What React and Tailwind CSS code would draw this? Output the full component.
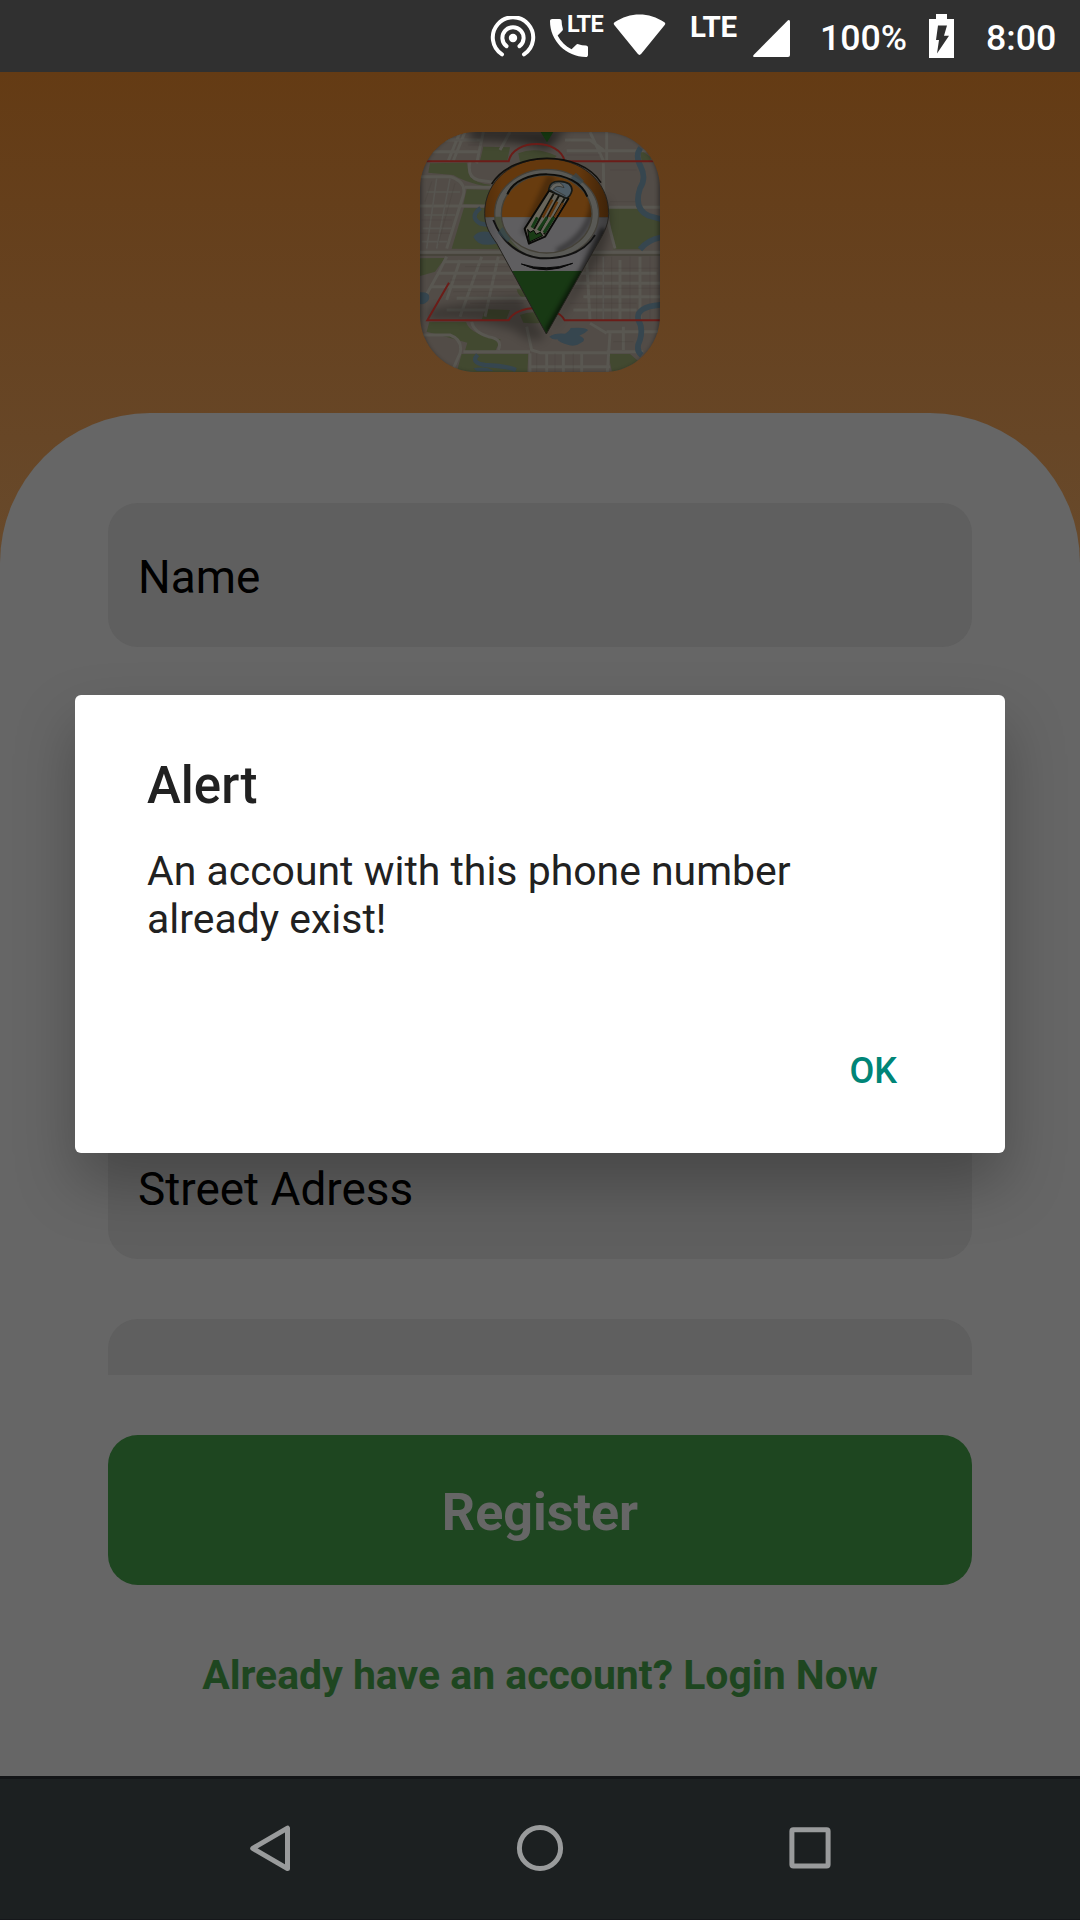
import React from 'react';

function HotspotIcon() {
  return (
    <svg className="h-[42px] w-[46px]" viewBox="0 0 46 42" fill="none" stroke="#fff" strokeWidth="4" strokeLinecap="round">
      <path d="M12 38.4A20.2 20.2 0 1 1 34 38.4" />
      <path d="M16.5 30.2A10.6 10.6 0 1 1 29.5 30.2" />
      <circle cx="23" cy="22" r="4.2" fill="#fff" stroke="none" />
    </svg>
  );
}

function PhoneIcon() {
  return (
    <svg className="mt-[19px] h-[38px] w-[38px]" viewBox="3 3 18 18" fill="#fff">
      <path d="M6.62 10.79c1.44 2.83 3.76 5.14 6.59 6.59l2.2-2.2c.27-.27.67-.36 1.02-.24 1.12.37 2.33.57 3.57.57.55 0 1 .45 1 1V20c0 .55-.45 1-1 1-9.39 0-17-7.61-17-17 0-.55.45-1 1-1h3.5c.55 0 1 .45 1 1 0 1.25.2 2.45.57 3.57.11.35.03.74-.25 1.02l-2.2 2.2z" />
    </svg>
  );
}

function StatusBar() {
  return (
    <div className="flex h-[72px] shrink-0 items-start bg-[#303030] pl-[490px] text-white">
      <div className="mt-4 flex h-[42px] w-[46px]"><HotspotIcon /></div>
      <div className="relative ml-[14px] w-[55px]">
        <PhoneIcon />
        <span className="absolute left-[17px] top-[16px] text-[23.5px] font-bold leading-[16px] tracking-[-0.6px]">LTE</span>
      </div>
      <svg className="ml-[8px] mt-[14px] h-[42px] w-[53px]" viewBox="0 0 53 42" fill="#fff">
        <path d="M1.3 10.9Q0 9.4 1.6 8.3C17-2.2 36-2.2 51.4 8.3Q53 9.4 51.7 10.9L28.3 39.8Q26.5 42 24.7 39.8Z" />
      </svg>
      <span className="ml-[24px] mt-[17px] w-[50px] text-[29.5px] font-bold leading-[21px] tracking-[-0.2px]">LTE</span>
      <svg className="ml-[13px] mt-[20px] h-[37px] w-[37px]" viewBox="0 0 37 37" fill="#fff">
        <path d="M35 .3Q37-.5 37 1.6V35Q37 37 35 37H1.3Q-.8 37 .6 35Z" />
      </svg>
      <span className="ml-[30px] w-[90px] text-[35.7px] font-medium leading-[76px]">100%</span>
      <svg className="ml-[19px] mt-[14px] h-[44px] w-[25px]" viewBox="0 0 25 44">
        <path fill="#fff" d="M7 0h11v5h7v39H0V5h7z" />
        <path fill="#303030" d="M9 11.5h9l-3 10.3h5L8 39.5l2-13.5H7z" />
      </svg>
      <span className="ml-[32px] text-[35.7px] font-medium leading-[76px]">8:00</span>
    </div>
  );
}

function MapTile() {
  return (
    <g>
      <path fill="#424930" d="M220 80L300 82L292 122H210ZM325 100Q378 78 440 108Q430 128 330 125ZM60 130L170 128L180 170Q200 190 245 195L230 200Q160 185 130 165L55 158ZM170 208L245 210L235 255L160 253ZM162 263L240 264Q225 330 275 388L125 386ZM595 262H690Q710 285 750 300V345Q715 350 690 388H610ZM30 415L105 414L75 455L30 468ZM690 88L722 112V124H695Z" />
      <path fill="#424930" d="M225 568L300 570L288 600H215ZM330 585Q380 565 430 595Q420 615 340 608ZM58 606H168Q180 645 272 658L255 695L165 692L172 668Q110 650 50 635ZM155 702L355 702L352 756H140ZM595 702L660 702Q680 720 700 735L690 756H606ZM320 508Q345 505 352 535Q325 535 320 508Z" />
      <g fill="none" stroke="#595751" strokeWidth="9">
        <path d="M30 60H215M30 95H210M150 36L115 122M165 36L130 122M300 36L270 90M220 36L200 130M465 60L540 60L580 90M540 36L580 122M590 36V122M470 92H720M30 170H120Q170 185 160 225L110 386M180 125Q170 170 205 180L270 190M165 202H250M30 258H235" />
        <path d="M580 130L582 255L592 300L615 386M590 262H750M30 397H300M520 397H750M110 410L85 460L35 550M150 420L110 540M215 410L150 590M265 410L225 590M105 425H300M80 460H320M60 500H330M140 535H360M110 570H230M470 490H750M500 460H740M530 420L540 600M630 420V600M690 410V600M520 530H750M490 570H680M590 635H750M600 640L592 756M640 620V690M540 610L590 640" />
        <path d="M40 645H120Q160 660 150 700L125 756M185 605Q190 635 235 650Q280 656 265 690M160 695H360M360 700V756M410 700V756M460 700V756M515 700V756M360 740H600M590 695H700M350 620L365 690L390 698H600" />
      </g>
      <g fill="none" stroke="#575550" strokeWidth="5">
        <path d="M50 216H150M42 285H135M38 325H125M35 365H112M80 175L50 386M120 175L80 386M580 410V600" />
      </g>
      <g fill="none" stroke="#3b362f" strokeWidth="2" opacity=".25">
        <path d="M90 60H200M175 75H215M470 105H570M600 150H680M600 245H685M65 185L45 245M35 300H125M30 340H120M135 190L85 370M165 440H295M120 480H310M130 515H325M180 550H340M510 445H745M480 505H750M480 550H680M560 410V600M605 410V600M660 410V600M720 410V600M610 665H670M380 700V756M435 700V756M490 700V756" />
      </g>
      <g fill="none" stroke="#36464f" strokeWidth="17">
        <path d="M692 84Q674 105 692 140T690 205Q670 265 715 287L755 298M755 352Q715 358 690 388M755 554Q675 560 685 600Q700 625 690 660Q675 690 695 706" />
        <path strokeWidth="13" d="M212 264Q177 290 210 310L270 322M203 704Q180 728 225 735Q290 738 318 750" />
      </g>
      <path fill="#36464f" d="M190 350Q205 328 245 337Q290 336 303 352Q280 362 265 370Q205 385 190 350ZM30 517Q65 515 56 540Q45 555 30 552ZM418 650Q435 638 465 641Q480 632 482 624Q530 620 534 631Q525 641 508 647Q534 658 512 669Q498 680 478 676Q445 667 442 658Q427 660 418 650ZM190 745Q230 738 250 753H200Z" />
    </g>
  );
}

function AppLogo() {
  return (
    <svg className="h-60 w-60" viewBox="30 36 720 720">
      <defs>
        <clipPath id="tile"><rect x="30" y="36" width="720" height="720" rx="170" /></clipPath>
        <clipPath id="pin"><path d="M410 116C510 116 596 180 596 280C596 320 575 350 553 388L409 642L260 370C239 340 224 318 224 280C224 180 310 116 410 116Z" /></clipPath>
        <clipPath id="disc"><ellipse cx="410" cy="282" rx="136" ry="117" /></clipPath>
        <filter id="soft" x="-50%" y="-50%" width="200%" height="200%"><feGaussianBlur stdDeviation="15" /></filter>
        <filter id="soft2" x="-50%" y="-50%" width="200%" height="200%"><feGaussianBlur stdDeviation="7" /></filter>
        <linearGradient id="pinShade" x1="0" x2="1"><stop offset="0" stopColor="#000" stopOpacity=".18" /><stop offset=".15" stopColor="#000" stopOpacity="0" /><stop offset=".75" stopColor="#000" stopOpacity="0" /><stop offset="1" stopColor="#000" stopOpacity=".4" /></linearGradient>
      </defs>
      <g clipPath="url(#tile)">
        <rect x="30" y="36" width="720" height="720" fill="#524c47" />
        <MapTile />
        <path d="M30 405H750" stroke="#3d3c30" strokeWidth="3" />
        <path d="M180 30H470L410 90Q330 60 180 60Z" fill="#000" opacity=".5" filter="url(#soft)" />
        <path d="M55 570Q200 540 330 530L405 650Q370 680 310 630Q180 590 55 600Z" fill="#000" opacity=".28" filter="url(#soft)" />
        <path d="M392 36H430L411 67Z" fill="#143510" />
        <g fill="none" stroke="#6b1c18" strokeWidth="6">
          <path d="M50 124H296C310 55 450 55 464 124H730" />
          <path d="M117 488L52 601H296C320 552 440 552 464 601H750" />
        </g>
        <path d="M590 230Q620 330 560 430L420 640L500 480Z" fill="#000" opacity=".3" filter="url(#soft)" />
        <g clipPath="url(#pin)">
          <rect x="220" y="110" width="380" height="182" fill="#64380d" />
          <rect x="220" y="292" width="380" height="162" fill="#5f5e60" />
          <rect x="220" y="453" width="380" height="200" fill="#183914" />
          <rect x="220" y="110" width="380" height="540" fill="url(#pinShade)" />
          <path d="M590 330L535 440L420 640" fill="none" stroke="#000" strokeWidth="38" opacity=".55" filter="url(#soft2)" />
        </g>
        <path d="M410 116C510 116 596 180 596 280C596 320 575 350 553 388L409 642L260 370C239 340 224 318 224 280C224 180 310 116 410 116Z" fill="none" stroke="#24221e" strokeWidth="3" />
        <path d="M245 192C310 90 510 90 573 188" fill="none" stroke="#11100d" strokeWidth="5" />
        <ellipse cx="410" cy="282" rx="156" ry="134" fill="#595955" stroke="#44413a" strokeWidth="4" />
        <path d="M254 290Q257 330 300 374Q330 392 340 398Q285 355 276 290Z" fill="#424930" opacity=".7" />
        <path d="M250 300Q290 400 390 415Q510 418 555 345" fill="none" stroke="#111" strokeWidth="6" />
        <path d="M490 166L514 190M270 330L300 358" stroke="#36464f" strokeWidth="22" opacity=".7" />
        <g clipPath="url(#disc)">
          <rect x="260" y="150" width="300" height="142" fill="#683c0f" />
          <rect x="260" y="292" width="300" height="120" fill="#5f5e60" />
          <path d="M550 240Q545 345 440 395" fill="none" stroke="#000" strokeWidth="20" opacity=".35" filter="url(#soft2)" />
          <path d="M425 170L365 300L345 345" fill="none" stroke="#000" strokeWidth="28" opacity=".25" filter="url(#soft2)" />
        </g>
        <ellipse cx="410" cy="282" rx="136" ry="117" fill="none" stroke="#444138" strokeWidth="4" />
        <path d="M292 223C325 142 500 142 532 230" fill="none" stroke="#0c0c0a" strokeWidth="6" />
        <path d="M334 432Q408 468 488 430Q408 456 334 432Z" fill="#080808" stroke="#080808" strokeWidth="3" />
        <g strokeLinejoin="round">
          <path d="M417 212L344 326L357 371L405 350L475 236Z" fill="#68655b" stroke="#090907" strokeWidth="6" />
          <path d="M353 328L358 366L398 347L391 337L378 343L371 331L360 337Z" fill="#193b15" stroke="#090907" strokeWidth="3" />
          <path d="M431 221L372 327M448 225L389 333M464 235L402 343" stroke="#11120b" strokeWidth="6" />
          <path d="M427 239L398 292M442 245L418 291M459 249L434 292" stroke="#613810" strokeWidth="7" />
          <path d="M382 292L366 323M411 292L385 331M431 292L402 338" stroke="#163c17" strokeWidth="9" />
          <path d="M416 208Q420 182 450 184Q486 186 486 211Q482 229 469 235Q438 223 416 208Z" fill="#4d5b64" stroke="#171915" strokeWidth="5" />
          <path d="M420 206Q427 187 449 188Q460 194 462 203Q438 193 430 208L467 228" fill="#666661" stroke="#2a2a25" strokeWidth="2" />
        </g>
        <rect x="22" y="20" width="736" height="752" rx="172" fill="none" stroke="#000" strokeWidth="26" opacity=".4" filter="url(#soft2)" />
      </g>
    </svg>
  );
}

function Field({ label }) {
  return (
    <div className="flex h-36 shrink-0 items-center rounded-[30px] bg-[#5f5f5f] pl-[30px] pt-[5px] text-[45.9px] text-black">
      {label}
    </div>
  );
}

function RegisterScreen() {
  return (
    <div className="flex flex-1 flex-col bg-linear-to-b from-[#643b14] from-0% to-[#684a2c] to-[500px]">
      <header className="flex h-[341px] shrink-0 justify-center pt-[60px]">
        <AppLogo />
      </header>
      <main className="flex flex-1 flex-col rounded-t-[150px] bg-[#666666] px-[108px] pt-[90px]">
        <div className="flex h-[872px] shrink-0 flex-col gap-[60px] overflow-hidden">
          <Field label="Name" />
          <Field label="" />
          <Field label="" />
          <Field label="Street Adress" />
          <Field label="" />
        </div>
        <button className="mt-[60px] h-[150px] shrink-0 rounded-[30px] bg-[#1e4620] pt-[6px] text-[52px] font-bold text-[#666666]">
          Register
        </button>
        <p className="mt-[60px] text-center text-[40.95px] font-bold leading-[60px] text-[#1e4620]">
          Already have an account? Login Now
        </p>
      </main>
    </div>
  );
}

function NavBar() {
  return (
    <nav className="flex h-36 shrink-0 items-start justify-between border-b border-t-[3px] border-b-[#15171a] border-t-[#131517] bg-[#1c2021] px-[247px] pt-[45px]">
      <svg className="h-[48px] w-[46px]" viewBox="0 0 46 48" fill="none" stroke="#999b9c" strokeWidth="5" strokeLinejoin="round">
        <path d="M40.5 4.2V44.6L5.7 24.4Z" />
      </svg>
      <svg className="h-[48px] w-[48px]" viewBox="0 0 48 48" fill="none" stroke="#999b9c" strokeWidth="5">
        <circle cx="24" cy="24" r="20.6" />
      </svg>
      <svg className="h-[48px] w-[46px]" viewBox="0 0 46 48" fill="none" stroke="#999b9c" strokeWidth="5">
        <rect x="4.9" y="5.7" width="36.2" height="36.2" rx="1.5" />
      </svg>
    </nav>
  );
}

function AlertDialog() {
  return (
    <div role="alertdialog" className="absolute left-[75px] top-[695px] flex h-[458px] w-[930px] flex-col rounded-[6px] bg-white px-[72px] shadow-[0_30px_60px_rgba(0,0,0,0.26)]">
      <h2 className="mt-[61px] text-[51px] font-medium leading-[60px] text-[#212121]">Alert</h2>
      <p className="mt-[31px] text-[40.95px] leading-[48px] text-[#212121]">
        An account with this phone number<br />already exist!
      </p>
      <button className="mt-[107px] self-end pr-[36px] text-[36px] font-medium leading-[42px] text-[#008577]">OK</button>
    </div>
  );
}

export default function App() {
  return (
    <div className="relative flex h-[1920px] w-[1080px] flex-col overflow-hidden bg-[#666666] font-['Roboto',sans-serif]">
      <StatusBar />
      <RegisterScreen />
      <NavBar />
      <AlertDialog />
    </div>
  );
}
